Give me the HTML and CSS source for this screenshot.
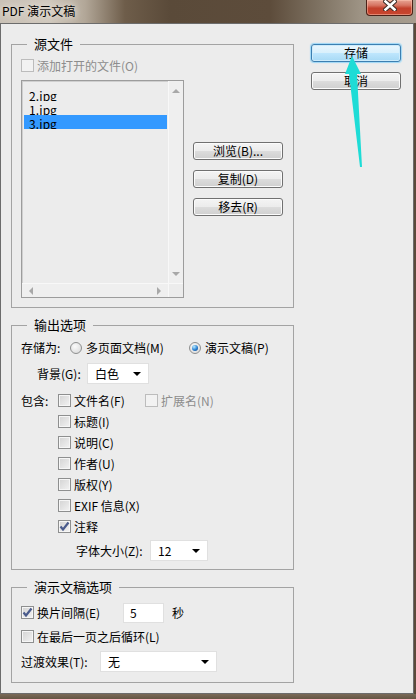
FILE: index.html
```html
<!DOCTYPE html>
<html lang="zh-CN">
<head>
<meta charset="utf-8">
<title>PDF 演示文稿</title>
<link rel="stylesheet" href="styles.css">
</head>
<body>
<div class="window">
  <div class="titlebar">
    <span class="title">PDF 演示文稿</span>
    <div class="close">
      <svg width="14" height="11" viewBox="0 0 14 11">
        <path d="M2.5 1.5 L11.5 9.5 M11.5 1.5 L2.5 9.5" stroke="#3a2a24" stroke-width="4.6" stroke-linecap="square"/>
        <path d="M2.5 1.5 L11.5 9.5 M11.5 1.5 L2.5 9.5" stroke="#ffffff" stroke-width="2.6" stroke-linecap="square"/>
      </svg>
    </div>
  </div>
  <div class="client">
    <div class="left-col">
      <div class="group g1">
        <span class="legend">源文件</span>
        <div class="row">
          <span class="cb disabled"></span><span class="lbl dim">添加打开的文件(O)</span>
        </div>
        <div class="src">
          <div class="list">
            <div class="items">
              <div class="item">2.jpg</div>
              <div class="item">1.jpg</div>
              <div class="item sel-item">3.jpg</div>
            </div>
            <div class="vbar"><span class="tri up"></span><span class="tri down"></span></div>
            <div class="hbar"><span class="tri lt"></span><span class="tri rt"></span></div>
            <div class="corner"></div>
          </div>
          <div class="side-btns">
            <div class="btn">浏览(B)...</div>
            <div class="btn">复制(D)</div>
            <div class="btn">移去(R)</div>
          </div>
        </div>
      </div>

      <div class="group g2">
        <span class="legend">输出选项</span>
        <div class="row r-save">
          <span class="lbl w-save">存储为:</span>
          <span class="opt o1"><span class="radio"></span><span class="lbl">多页面文档(M)</span></span>
          <span class="opt"><span class="radio on"></span><span class="lbl">演示文稿(P)</span></span>
        </div>
        <div class="row r-bg">
          <span class="lbl w-bg">背景(G):</span>
          <div class="select s-bg"><span>白色</span><span class="arr"></span></div>
        </div>
        <div class="row r-inc">
          <span class="lbl w-inc">包含:</span>
          <span class="opt o-file"><span class="cb"></span><span class="lbl">文件名(F)</span></span>
          <span class="opt"><span class="cb disabled"></span><span class="lbl dim">扩展名(N)</span></span>
        </div>
        <div class="row ind"><span class="cb"></span><span class="lbl">标题(I)</span></div>
        <div class="row ind"><span class="cb"></span><span class="lbl">说明(C)</span></div>
        <div class="row ind"><span class="cb"></span><span class="lbl">作者(U)</span></div>
        <div class="row ind"><span class="cb"></span><span class="lbl">版权(Y)</span></div>
        <div class="row ind"><span class="cb"></span><span class="lbl">EXIF 信息(X)</span></div>
        <div class="row ind"><span class="cb checked"><svg width="11" height="11" viewBox="0 0 11 11"><path d="M1.5 5.5 L4 8.5 L9.5 1.5" fill="none" stroke="#4a5b8c" stroke-width="2.2"/></svg></span><span class="lbl">注释</span></div>
        <div class="row r-size">
          <span class="lbl w-size">字体大小(Z):</span>
          <div class="select s-size"><span>12</span><span class="arr"></span></div>
        </div>
      </div>

      <div class="group g3">
        <span class="legend">演示文稿选项</span>
        <div class="row">
          <span class="opt o-int"><span class="cb checked"><svg width="11" height="11" viewBox="0 0 11 11"><path d="M1.5 5.5 L4 8.5 L9.5 1.5" fill="none" stroke="#4a5b8c" stroke-width="2.2"/></svg></span><span class="lbl">换片间隔(E)</span></span>
          <div class="input">5</div>
          <span class="lbl sec">秒</span>
        </div>
        <div class="row r-loop"><span class="cb"></span><span class="lbl">在最后一页之后循环(L)</span></div>
        <div class="row r-trans">
          <span class="lbl w-trans">过渡效果(T):</span>
          <div class="select s-trans"><span>无</span><span class="arr"></span></div>
        </div>
      </div>
    </div>

    <div class="right-col">
      <div class="btn default">存储</div>
      <div class="btn">取消</div>
    </div>
  </div>
  <div class="bottom-frame"></div>
</div>
<svg class="pointer" width="416" height="699" viewBox="0 0 416 699">
  <polygon points="352,56 361,74 357,74 362,167 360,167 349,74 345,74" fill="#1edcd6"/>
</svg>
</body>
</html>
```

FILE: styles.css
```css
* { box-sizing: border-box; }

body {
  margin: 0;
  background: #5b4b3b;
  font-family: "Noto Sans CJK SC", "Microsoft YaHei", sans-serif;
  font-size: 12px;
  color: #000;
  position: relative;
}

.window {
  width: 416px;
  height: 699px;
  display: flex;
  flex-direction: column;
  background: #5a4a3a;
}

.titlebar {
  height: 23px;
  flex: none;
  display: flex;
  align-items: flex-start;
  background: linear-gradient(90deg, #c9c1b6 0, #cfc7bc 50px, #b2a798 85px, #6e5d4a 125px, #5a4a39 170px, #5d4c3b 270px, #7f7363 320px, #9d9384 360px, #a79d8f 416px);
}

.title {
  padding: 3px 0 0 2px;
  line-height: 16px;
  font-size: 12px;
  color: #000;
  text-shadow: 0 0 6px #eee8e0, 0 0 10px #e6dfd5;
}

.close {
  margin-left: auto;
  margin-right: 3px;
  width: 47px;
  height: 16px;
  border: 1px solid #4b2218;
  border-top: none;
  border-radius: 0 0 4px 4px;
  background: linear-gradient(#e7a493 0, #d77563 35%, #c2402b 55%, #c8462f 100%);
  box-shadow: inset 0 0 0 1px rgba(255, 200, 180, 0.5);
  display: flex;
  justify-content: center;
  align-items: flex-start;
}

.close svg { display: block; margin-top: 0; }

.client {
  width: 414px;
  height: 671px;
  flex: none;
  border: 1px solid #6c6c6c;
  background: #ececec;
  display: flex;
  padding: 20px 0 0 10px;
}

.bottom-frame {
  flex: 1;
  background: linear-gradient(#7a6a58, #655543);
}

.left-col {
  width: 283px;
  flex: none;
  display: flex;
  flex-direction: column;
}

.right-col {
  width: 90px;
  margin-left: 17px;
  display: flex;
  flex-direction: column;
  gap: 10px;
}

.group {
  position: relative;
  border: 1px solid #a3a3a3;
  padding: 0 9px;
}

.g1 { height: 264px; padding-top: 10px; }
.g2 { height: 245px; margin-top: 17px; padding-top: 11px; }
.g3 { height: 96px; margin-top: 17px; padding-top: 14px; }

.legend {
  position: absolute;
  top: -9px;
  left: 15px;
  height: 16px;
  line-height: 16px;
  padding: 0 7px;
  font-size: 13px;
  background: #ececec;
}

.row {
  height: 21px;
  display: flex;
  align-items: center;
}

.lbl { white-space: nowrap; line-height: 16px; }
.dim { color: #8d8d8d; }

.cb {
  width: 13px;
  height: 13px;
  flex: none;
  border: 1px solid #8e8f8f;
  background: linear-gradient(135deg, #d3d3d3, #f3f3f3);
  box-shadow: inset 0 0 0 1px #f6f6f6;
  margin-right: 3px;
  display: flex;
  align-items: center;
  justify-content: center;
}
.cb.disabled {
  border-color: #bcbcbc;
  background: #f2f2f2;
  box-shadow: none;
}
.cb svg { display: block; }

.radio {
  width: 12px;
  height: 12px;
  flex: none;
  border-radius: 50%;
  border: 1px solid #8e8f8f;
  background: radial-gradient(circle at 40% 35%, #fafafa, #d6d6d6);
  display: flex;
  align-items: center;
  justify-content: center;
}
.radio.on::after {
  content: "";
  width: 6px;
  height: 6px;
  border-radius: 50%;
  background: radial-gradient(circle at 35% 30%, #b9ecff, #2a80d2 55%, #0c3e7a);
}

.opt { display: flex; align-items: center; }
.opt .radio + .lbl { margin-left: 4px; }

/* source list */
.g1 .row { margin-bottom: 4px; }

.src { display: flex; }

.list {
  width: 163px;
  height: 218px;
  border: 1px solid #9c9c9c;
  box-shadow: inset 1px 1px 0 #cfcfcf;
  background: #ececec;
  display: grid;
  grid-template-columns: 1fr 15px;
  grid-template-rows: 1fr 14px;
}

.items { padding: 6px 1px 0 2px; }

.item {
  height: 14px;
  overflow: hidden;
  padding: 2px 0 0 5px;
  line-height: 14px;
  white-space: nowrap;
}
.sel-item { background: #3399ff; }

.vbar {
  border-left: 1px solid #f8f8f8;
  background: #efefef;
  display: flex;
  flex-direction: column;
  align-items: center;
  justify-content: space-between;
  padding: 8px 0 7px;
}
.hbar {
  border-top: 1px solid #f8f8f8;
  background: #efefef;
  display: flex;
  align-items: center;
  justify-content: space-between;
  padding: 0 7px;
}
.corner {
  background: #ececec;
  border-top: 1px solid #f8f8f8;
  border-left: 1px solid #f8f8f8;
}

.tri { width: 0; height: 0; }
.tri.up { border-left: 4px solid transparent; border-right: 4px solid transparent; border-bottom: 4px solid #a8a8a8; }
.tri.down { border-left: 4px solid transparent; border-right: 4px solid transparent; border-top: 4px solid #a8a8a8; }
.tri.lt { border-top: 4px solid transparent; border-bottom: 4px solid transparent; border-right: 4px solid #a8a8a8; }
.tri.rt { border-top: 4px solid transparent; border-bottom: 4px solid transparent; border-left: 4px solid #a8a8a8; }

.side-btns {
  margin-left: 9px;
  width: 90px;
  padding-top: 62px;
  display: flex;
  flex-direction: column;
  gap: 10px;
}

.btn {
  height: 18px;
  border: 1px solid #707070;
  border-radius: 3px;
  background: linear-gradient(#f4f4f4 0, #ececec 48%, #dcdcdc 52%, #cfcfcf 100%);
  box-shadow: inset 0 0 0 1px #fbfbfb;
  display: flex;
  align-items: center;
  justify-content: center;
  line-height: 14px;
  white-space: nowrap;
}
.btn.default {
  border-color: #3c7fb1;
  background: linear-gradient(#eaf6fd 0, #d9f0fc 48%, #bee6fd 52%, #a7d9f5 100%);
  box-shadow: inset 0 0 0 1px #cdebfb, 0 0 1px 1px #9ed8f7;
}

/* output options */
.w-save { width: 49px; }
.o1 { width: 119px; }

.r-bg { margin-top: 5px; padding-left: 16px; }
.w-bg { width: 50px; }

.select {
  height: 21px;
  background: #fff;
  border: 1px solid #e0e0e0;
  display: flex;
  align-items: center;
  padding-left: 7px;
  line-height: 16px;
}
.select .arr {
  margin-left: auto;
  margin-right: 7px;
  width: 0;
  height: 0;
  border-left: 4px solid transparent;
  border-right: 4px solid transparent;
  border-top: 4px solid #000;
}
.s-bg { width: 62px; }

.r-inc { margin-top: 6px; }
.w-inc { width: 37px; }
.o-file { width: 87px; }

.ind { padding-left: 37px; }

.r-size { margin-top: 3px; padding-left: 55px; }
.w-size { width: 74px; }
.s-size { width: 58px; }

/* presentation options */
.o-int { width: 102px; }
.input {
  width: 41px;
  height: 20px;
  background: #fff;
  border: 1px solid #e0e0e0;
  padding-left: 6px;
  line-height: 18px;
}
.sec { margin-left: 8px; }
.r-loop { margin-top: 3px; }
.r-trans { margin-top: 4px; }
.w-trans { width: 79px; }
.s-trans { width: 117px; }

.pointer {
  position: absolute;
  left: 0;
  top: 0;
  pointer-events: none;
}
```
